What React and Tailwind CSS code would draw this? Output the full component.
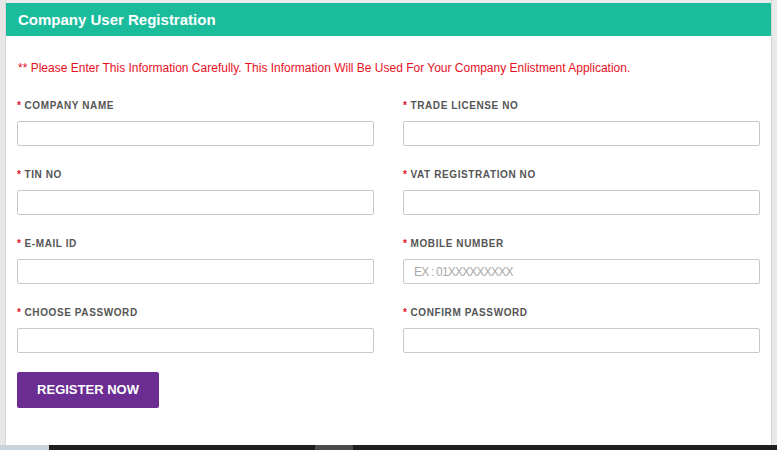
const Field = ({ label, placeholder, type = "text" }) => (
  <div className="flex flex-col">
    <label className="text-[10px] leading-[12px] font-bold tracking-[0.6px] text-[#555]">
      <span className="text-[#e0112b] mr-[3px]">*</span>
      {label}
    </label>
    <input
      type={type}
      placeholder={placeholder}
      className="mt-[9px] h-[25px] w-full rounded-[2px] border border-[#c8c8c8] bg-white px-[10px] text-[12px] tracking-[-0.8px] text-[#555] placeholder:text-[#a9a9a9] outline-none"
    />
  </div>
);

const App = () => {
  return (
    <div className="flex h-[450px] w-[777px] flex-col overflow-hidden bg-[#ebebeb] font-['Liberation_Sans',Arial,sans-serif]">
      <div className="flex flex-1">
        {/* left strip */}
        <div className="w-[6px] bg-[#e6e6e6] border-r border-[#d9d9d9]" />

        {/* Panel */}
        <div className="mt-[3px] flex flex-1 flex-col bg-white">
          <div className="flex h-[33px] items-center bg-[#1abc9c] px-[12px]">
            <h1 className="mt-[1px] text-[15px] font-bold text-white">Company User Registration</h1>
          </div>

          <div className="px-[11px] pt-[25px]">
            <p className="text-[12px] leading-[14px] text-[#e8101e] pl-[1px]">
              ** Please Enter This Information Carefully. This Information Will Be Used For Your Company Enlistment Application.
            </p>

            <div className="mt-[25px] grid grid-cols-2 gap-x-[29px] gap-y-[23px]">
              <Field label="COMPANY NAME" />
              <Field label="TRADE LICENSE NO" />
              <Field label="TIN NO" />
              <Field label="VAT REGISTRATION NO" />
              <Field label="E-MAIL ID" type="email" />
              <Field label="MOBILE NUMBER" placeholder="EX : 01XXXXXXXXX" />
              <Field label="CHOOSE PASSWORD" type="password" />
              <Field label="CONFIRM PASSWORD" type="password" />
            </div>

            <button className="mt-[19px] h-[36px] w-[142px] rounded-[2px] bg-[#6b2d91] text-[13px] font-bold text-white">
              REGISTER NOW
            </button>
          </div>
        </div>

        {/* right scrollbar strip */}
        <div className="w-[6px] bg-[#e9e9e9] border-l border-[#d4d4d4]" />
      </div>

      {/* bottom taskbar */}
      <div className="flex h-[5px]">
        <div className="w-[49px] bg-[#c9d3dc]" />
        <div className="w-[266px] bg-[#1e1e1e]" />
        <div className="w-[38px] bg-[#4a4a4a]" />
        <div className="flex-1 bg-[#1e1e1e]" />
      </div>
    </div>
  );
};

export default App;
